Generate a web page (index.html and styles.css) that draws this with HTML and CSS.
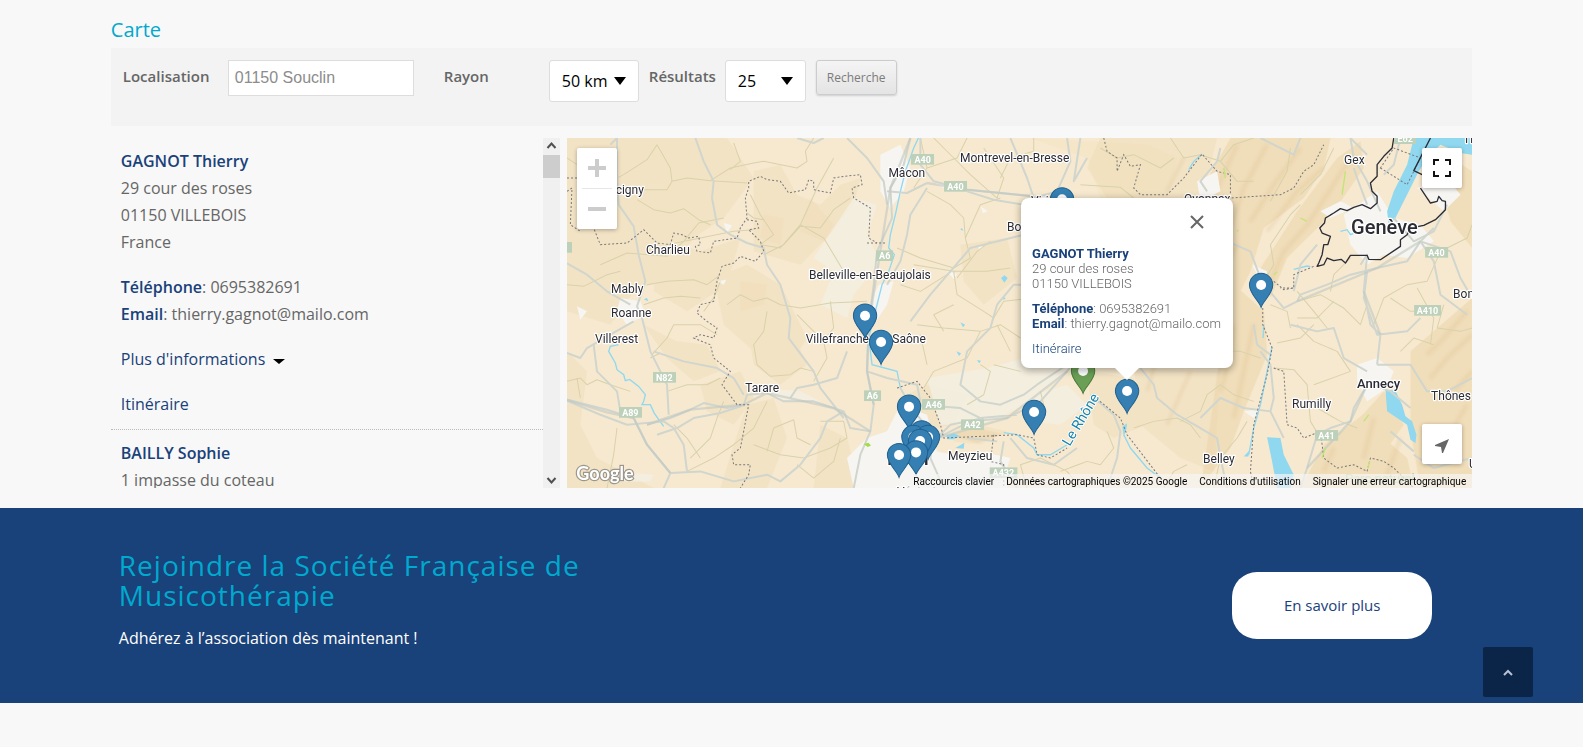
FILE: index.html
```html
<!DOCTYPE html>
<html lang="fr">
<head>
<meta charset="utf-8">
<meta name="viewport" content="width=device-width, initial-scale=1">
<title>Carte</title>
<link rel="stylesheet" href="styles.css">
</head>
<body>
<main class="wrap">
  <h2 class="title">Carte</h2>

  <form class="search">
    <label class="label label-wide" for="place">Localisation</label>
    <input class="place" id="place" type="text" value="01150 Souclin">
    <label class="label label-wide" for="radius">Rayon</label>
    <span class="pick pick-radius">
      <select class="select" id="radius"><option>50 km</option></select>
      <svg class="arrow" viewBox="0 0 12 8" aria-hidden="true"><path d="M0 0H12L6 8Z"/></svg>
    </span>
    <label class="label label-results" for="results">Résultats</label>
    <span class="pick pick-results">
      <select class="select" id="results"><option>25</option></select>
      <svg class="arrow" viewBox="0 0 12 8" aria-hidden="true"><path d="M0 0H12L6 8Z"/></svg>
    </span>
    <button class="go" type="button">Recherche</button>
  </form>

  <section class="locator">
    <div class="panel">
      <ul class="stores">
        <li class="store">
          <p><strong>GAGNOT Thierry</strong><br>29 cour des roses<br>01150 VILLEBOIS<br>France</p>
          <p><strong>Téléphone</strong>: 0695382691<br><strong>Email</strong>: thierry.gagnot@mailo.com</p>
          <p><a class="more" href="#">Plus d'informations<svg class="caret" viewBox="0 0 12 5" aria-hidden="true"><path d="M0 0H12L6 5Z"/></svg></a></p>
          <p><a href="#">Itinéraire</a></p>
        </li>
        <li class="store">
          <p><strong>BAILLY Sophie</strong><br>1 impasse du coteau</p>
        </li>
      </ul>
      <div class="track" aria-hidden="true">
        <svg class="track-arrow" viewBox="0 0 17 17"><path d="M4.500 10L8.500 5.500L12.500 10"/></svg>
        <span class="thumb"></span>
        <svg class="track-arrow track-down" viewBox="0 0 17 17"><path d="M4.500 7L8.500 11.500L12.500 7"/></svg>
      </div>
    </div>

    <div class="map">
      <svg class="tiles" viewBox="0 0 2715 1050" preserveAspectRatio="xMinYMin slice">
        <defs>
          <g id="pin"><path d="M0 0C-6 -20 -35 -40 -35 -67A35 35 0 0 1 35 -67C35 -40 6 -20 0 0Z"/><circle cy="-67" r="15"/></g>
          <filter id="soft"><feGaussianBlur stdDeviation="5"/></filter>
        </defs>
        <rect class="land" width="2715" height="1050"/>

        <!-- relief -->
        <g class="relief">
          <path d="M0 0H480L560 120L470 240L380 300L300 420L200 460L130 560L0 520Z"/>
          <path d="M280 300L400 340L520 300L480 440L360 520L260 460Z"/>
          <path d="M560 100L640 80L690 170L760 200L820 140L880 120L860 200L780 300L700 380L560 340Z"/>
          <path d="M440 420L540 380L640 440L720 600L660 700L560 640L470 560Z"/>
          <path d="M230 560L330 610L420 620L460 700L380 730L300 660Z"/>
          <path d="M540 560L660 540L720 680L640 740L560 680Z"/>
          <path d="M0 640L60 700L40 860L90 960L260 1050H0Z"/>
          <path d="M400 740L520 700L560 780L500 860L420 820Z"/>
          <path d="M540 800L620 780L660 900L600 1050H460L500 920Z"/>
          <path d="M760 860L840 900L880 1050H740Z"/>
          <path d="M1000 780L1080 740L1200 770L1160 860L1060 880Z"/>
          <path d="M1160 880L1230 860L1320 880L1240 920L1160 910Z"/>
          <path d="M1180 320L1320 300L1350 420L1250 500L1190 430Z"/>
          <path d="M1600 0H1950L1900 200L1800 260L1620 180L1560 90Z"/>
          <path d="M1560 700L1700 720L1740 860L1640 900L1580 860Z"/>
          <path d="M1700 690L1960 700L1940 1000L1840 960L1720 860Z"/>
        </g>
        <g class="relief deep">
          <path d="M1990 0H2290L2270 90L2210 180L2090 270L2050 400L2000 500L1900 520L1880 330L1900 160Z"/>
          <path d="M2310 60L2380 10L2390 90L2300 220L2160 360L2110 480L2080 390L2190 220Z"/>
          <path d="M1990 430L2090 520L2100 650L2030 820L1990 930L1900 1050L1930 850Z"/>
          <path d="M2530 640L2715 480V1050H2560L2530 880Z"/>
          <path d="M2270 920L2400 820L2450 900L2520 960L2540 1050H2200Z"/>
          <path d="M2360 860L2450 760L2510 860L2440 960Z"/>
          <path d="M2590 20L2715 100V330L2650 250Z"/>
          <path d="M1390 0L1560 60L1600 180H1800L1830 60L1740 20Z" opacity=".3"/>
          <path d="M590 230L650 240L640 320L580 300Z" opacity=".4"/>
          <path d="M730 180L800 260L770 310L700 280Z" opacity=".4"/>
          <path d="M520 430L600 440L590 500L520 520Z" opacity=".4"/>
          <path d="M1140 890L1230 870L1310 888L1230 915Z"/>
        </g>
        <g class="shade" filter="url(#soft)">
          <path d="M2010 20L1960 130L1920 220M2100 20L2030 150L1980 300M2200 30L2120 140L2050 250M2270 90L2190 160L2100 280M2230 250L2150 340L2110 430M2350 60L2280 170L2220 260M2010 320L1960 420M2000 560L1990 660L1960 760M2060 560L2030 700L2000 840"/>
          <path d="M2700 520L2630 600L2580 650M2715 590L2640 660L2590 720M2715 700L2660 760M2700 800L2640 900M2420 840L2390 960M2300 930L2270 1000M2500 900L2460 1010M1780 620L1740 760M1870 700L1800 860M1850 60L1800 160"/>
        </g>

        <!-- built-up areas -->
        <g class="urban">
          <path d="M160 480L220 490L235 530L180 560L150 520ZM30 505L60 520L40 545ZM470 255L495 262L480 285ZM450 430L478 425L470 440Z"/>
          <path d="M940 50L1000 20L1030 90L1010 160L970 210L940 160Z"/>
          <path d="M935 440L980 430L960 500L920 560L890 540Z"/>
          <path d="M1140 400L1170 408L1160 424ZM1235 320L1250 328L1235 336ZM1105 136L1150 140L1130 150ZM1240 205L1262 220L1248 226Z"/>
          <path d="M840 960L900 900L960 880L1000 800L1080 830L1110 940L1200 960L1310 980L1320 1050H860Z"/>
          <path d="M1130 1000L1240 940L1330 960L1300 1050H1130Z"/>
          <path d="M2330 230L2430 160L2480 240L2560 260L2600 310L2520 360L2450 350L2400 380L2350 320Z"/>
          <path d="M2260 220L2320 190L2360 210L2290 240ZM2550 150L2640 120L2680 170L2630 220Z"/>
          <path d="M2370 680L2430 660L2480 700L2460 750L2400 790L2370 730Z"/>
          <path d="M1890 130L1950 100L1960 160L1900 190ZM2030 820L2080 815L2060 840ZM2055 380L2100 400L2090 450Z"/>
          <path d="M1960 940L1990 960L1960 980Z"/>
        </g>
        <g class="plain">
          <path d="M860 180L930 200L900 290L940 370L860 470L840 540L760 500L800 400L740 360Z"/>
          <path d="M1080 720L1260 690L1520 620L1500 700L1380 800L1240 860L1120 860Z"/>
          <path d="M1360 780L1500 740L1560 800L1480 860L1380 850Z"/>
          <path d="M600 750L700 760L760 790L640 790ZM130 1000L260 1010L250 1030H140Z"/>
        </g>

        <!-- lakes and rivers -->
        <g class="water">
          <path d="M2540 0L2600 -5H2715V50L2680 45L2620 20L2580 60L2555 100L2530 150L2500 210L2480 250L2465 260L2460 220L2480 160L2520 80Z"/>
          <path d="M2455 755L2485 758L2505 800L2515 835L2535 850L2548 890L2545 915L2530 905L2520 860L2490 840L2460 820Z"/>
          <path d="M2100 898L2140 900L2150 950L2180 1010L2170 1050H2130L2115 970Z"/>
          <path d="M2030 955L2046 938L2044 955ZM1180 275L1184 270L1190 278Z"/>
          <path d="M1137 892L1160 886L1178 894L1160 904H1142ZM1165 930L1192 914L1190 932Z"/>
          <path d="M1302 420L1312 412L1322 420L1312 434ZM1306 476L1316 480L1310 486ZM230 484L240 480L244 490ZM1180 553L1194 560L1188 568ZM1168 640L1182 646L1176 654ZM1230 666L1242 668L1236 676ZM1310 626L1322 632Z"/>
          <path d="M1666 866L1680 856L1678 872L1670 896Z"/>
        </g>
        <g class="river">
          <path d="M155 620L130 625L125 640L145 675L150 695L170 710L175 728L188 724L215 745L235 770L230 790L225 800H250L262 826L290 865"/>
          <path d="M1055 -2L1040 30L1015 100L1000 160L985 230L970 290L965 330L982 350L965 400L945 440L930 500L920 540L905 600L915 680L990 700L1000 750"/>
          <path d="M2115 625L2100 700L2080 800L2060 870L2045 950M2090 560L2088 600M1905 48L1880 70L1865 95"/>
          <path d="M1310 884L1350 890L1400 930L1410 950L1450 950L1500 920M2320 280L2340 275L2350 290L2370 282M2180 394L2220 384L2230 386"/>
          <path d="M1670 890L1690 930L1740 990L1780 1020"/>
        </g>

        <!-- local roads -->
        <g class="minor">
          <path d="M130 130L170 110L240 65L270 20M0 60L30 80M270 20L310 90L315 130L300 155L225 155M315 130L360 120L430 128L540 135M210 185L260 215L310 225L350 212L395 245L430 260"/>
          <path d="M100 380L180 345L300 355L350 310L395 255L470 240M300 320L400 300L500 280L560 275M430 128L490 90L560 75L590 70L690 90L720 70L715 40L740 0M500 15L520 70L490 95"/>
          <path d="M550 170L580 230L620 290L580 320L640 330L700 260L750 150L800 60M700 260L770 300L830 400M590 350L650 320L700 265L760 270L800 215L850 180M540 225L560 240L590 245"/>
          <path d="M0 440L50 445L120 410L160 400M240 440L300 430L380 425L420 440L460 410M230 500L290 480L340 475L400 480M460 430L440 480L410 520M480 500L520 470L560 490L600 480L640 500L700 510L790 495L900 490"/>
          <path d="M255 650L300 600L320 560L400 560L450 590M250 660L280 645M600 520L590 580L560 620L570 680L610 715L670 710L700 690L740 700M690 530L740 580L770 610L780 660L740 730M790 490L800 570L760 620"/>
          <path d="M0 730L40 720L60 740L90 725L130 740L190 760M30 720L40 780M150 870L140 950L120 1050M320 860L360 900L400 960M370 960L430 900L450 840L470 790M360 1000L440 960L500 920L560 870L600 790"/>
          <path d="M560 920L640 950L710 960L790 930L840 900L830 850L760 850M600 940L620 870L680 845L690 900L730 920M690 980L740 1020L800 970L820 900M300 760L360 740L420 740L460 720"/>
          <path d="M1040 150L1080 90L1170 60L1200 0M1080 90L1060 0M1080 160L1150 200L1190 240L1195 300L1210 360L1160 390L1060 360L990 330M1100 0L1160 60L1210 110L1290 180L1310 120L1250 30M1195 300L1240 200L1300 180"/>
          <path d="M1160 400L1200 400L1260 400L1330 390M1040 380L1160 400L1170 470L1250 520L1280 540L1310 490L1400 480M1140 410L1060 460L1000 440M1170 420L1230 340L1270 310M1300 120L1330 60L1400 40L1400 0"/>
          <path d="M1050 560L1130 570L1240 580L1300 560L1360 600M1240 580L1200 660L1100 700L1070 750M1060 590L1080 680M1130 580L1100 530L1160 500M1240 680L1270 700L1250 770L1200 800M1330 640L1290 560M1280 680L1360 700"/>
          <path d="M1400 850L1430 800L1420 760M1380 1050L1360 980L1420 960L1500 1000L1540 1050M1480 1000L1560 970L1600 980L1640 930L1620 880M1700 870L1760 850L1830 840L1870 860L1900 900M1790 1050L1820 1000L1860 980"/>
          <path d="M1540 140L1660 148L1700 180M1600 30L1650 60L1700 50L1780 90L1820 60M1810 0L1850 60L1900 50L1960 70L2010 130L2060 130M1960 70L2000 20L2060 0M2110 190L2160 100L2170 30M2200 170L2260 110L2300 30"/>
          <path d="M2090 430L2120 380L2110 320L2170 230L2200 200M1910 400L1950 390M2190 490L2260 470L2330 510L2380 560L2400 500M2190 460L2240 520L2280 570M2450 480L2520 440L2580 430L2620 340M2450 480L2420 560"/>
          <path d="M2240 560L2200 600L2130 615M2190 540L2250 540L2300 490M2120 690L2180 695L2220 740L2230 850L2260 900M2190 560L2240 610L2310 640L2350 700L2240 740M2250 810L2320 850L2370 870M2470 480L2530 520L2600 520"/>
          <path d="M1960 740L1920 770L1900 820L1840 850M1960 740L2000 770L2060 790M2040 850L2010 900L1960 960L1940 1050M1880 620L1960 640L2020 640L2080 660M2110 500L2160 520L2170 570"/>
          <path d="M2630 500L2610 570L2680 580L2715 570M2550 450L2600 540L2590 620M2500 640L2540 600L2600 620M2640 330L2700 300L2715 260M2350 360L2300 410L2290 460"/>
        </g>

        <!-- motorways and main roads -->
        <g class="major">
          <path d="M150 0L150 120L155 200L200 265L215 350L235 430L210 505L225 540L250 640L300 740L305 830"/>
          <path d="M385 0L410 70L440 130L435 180L450 260L490 290L540 315L590 330L600 380L640 440L670 540L665 600L740 700L760 750L830 840"/>
          <path d="M0 376L60 410L120 460L190 500M200 550L130 590L60 630L40 660L0 645M80 620L90 700L150 760L160 820"/>
          <path d="M0 784L60 800L120 815L200 840L240 920L310 1005L290 1050M0 788L100 830L180 860L290 850L320 870L350 920L360 1000"/>
          <path d="M240 860L310 840L370 815L410 795L480 810L530 800M530 770L500 720L450 690L350 670L260 640M270 890L330 870L380 840L460 825L530 802L540 770L600 765L650 790L740 790L800 810L830 820L850 870L910 880"/>
          <path d="M830 820L780 850L760 900L700 980L640 1030L600 1010L500 1030L400 1000L310 1005M670 780L690 750L740 740L810 720L840 640M690 0L740 15L770 0M840 0L900 60L950 130L960 200"/>
          <path d="M1030 0L1010 80L970 150L975 240L930 340L920 440L905 560L900 700L920 800L910 880L880 950L860 1050"/>
          <path d="M1060 0L1060 80L1100 130L1200 155L1300 165L1400 175M960 160L1020 165L1080 135M1080 150L1030 230L1020 290L1000 370L960 440M1200 160L1280 185L1370 200"/>
          <path d="M1370 290L1210 330L1150 400L1090 470L1030 550M1330 0L1380 120L1400 180L1470 160L1510 70L1500 0M1540 0L1520 130L1560 60"/>
          <path d="M1410 440L1340 440L1290 500L1270 570L1200 640L1180 740L1240 790L1300 800L1370 770L1410 740L1500 680M1000 750L1040 820L1110 900L1210 850L1320 840L1420 790L1500 700L1540 650M1050 800L1180 810L1240 840L1350 830"/>
          <path d="M1110 900L1150 860L1250 840M1100 880L1090 960L1130 1050M1310 910L1300 970L1350 1050M1330 900L1380 960L1460 980L1530 930M1200 900L1290 910M900 700L960 720L1050 740L1060 790M960 960L1040 930L1110 900"/>
          <path d="M1570 770L1640 830L1660 880L1650 960L1620 1050M1720 690L1760 740L1770 780L1830 830L1900 870L1950 900L1960 960L1980 1050M1900 840L1960 780L2030 810L2110 820"/>
          <path d="M1980 310L2050 340L2080 420L2100 450L2150 510L2190 490L2200 470L2280 440L2350 410L2430 390L2520 370L2560 310L2600 270"/>
          <path d="M2380 380L2400 350L2390 460L2410 560L2440 590L2430 680M2400 400L2390 480L2430 590L2520 580L2560 540M2170 560L2250 580L2300 570L2330 660L2400 700M2430 680L2530 680L2580 760L2640 760L2715 720"/>
          <path d="M2400 740L2360 810L2350 850L2290 870L2250 890L2220 990L2200 1050M2420 740L2470 760L2530 810M2560 310L2600 370L2620 470L2700 530M2560 310L2650 340L2680 420L2715 480M2480 240L2540 310L2600 280L2640 200"/>
          <path d="M2080 640L2110 680L2120 780L2110 820L2150 900M2060 560L2070 620L2110 650M1920 160L1900 130L1950 70L1960 30M2360 90L2370 120L2400 200M2450 110L2480 80L2500 0M2400 50L2350 0L2360 60L2400 130L2440 220"/>
          <path d="M2540 950L2600 990L2715 960M2470 880L2540 940M2180 460L2200 380L2250 320M150 0L130 20M2080 0L2180 50L2200 0"/>
        </g>
        <g class="major-core">
          <path d="M0 786L120 823L200 840L240 920L310 1005M240 860L370 815L530 800L600 765L800 810L910 880M1030 0L970 150L905 560L900 700L920 800M1080 135L1200 155L1400 175M1110 900L1320 840L1500 700"/>
          <path d="M2390 460L2440 590M2220 990L2350 850L2400 740M2190 490L2430 390L2560 310"/>
        </g>

        <!-- administrative limits -->
        <g class="limit">
          <path d="M0 120H30M0 160L15 150L10 260L40 280M82 275L100 320L180 315L230 275L270 315L310 320L320 285L345 290L365 300L395 295L400 320L385 325L390 340L430 345L440 310L510 300L520 270L540 240L535 180L545 150L545 130L580 115L600 125L640 130L665 165L715 155L725 125L740 130L740 155L790 165L800 120L830 115L880 110L885 140L855 150L860 180L910 210L905 300L930 315"/>
          <path d="M540 245L570 250L575 270L545 275L580 310L590 340L565 370L520 355L500 375L465 385L450 430L440 490L400 500L390 525L420 550L450 570L440 600L400 590L380 600L430 620L440 660L490 700L465 740L510 800L545 800L530 880L520 930L495 950L500 980L550 980L545 1010L520 1050"/>
          <path d="M1610 0L1620 40L1650 60L1650 100L1670 50L1690 85L1720 80L1700 150L1720 170H1800L1850 120L1905 48L1950 100L1990 110L1990 180L2140 170L2180 150L2210 100L2240 80L2270 20"/>
          <path d="M900 315L960 315M990 750L1050 730L1090 780L1120 860L1130 900L1350 890L1400 900L1410 950L1450 960L1500 930M1280 890L1270 970L1310 980L1310 1050"/>
          <path d="M2087 510V560L2115 630L2100 710L2060 860L2050 1000L2060 1050M2120 690L2150 700L2160 860L2190 870L2210 900L2260 880L2270 960L2310 990L2360 980L2400 1000L2410 960L2450 970L2480 990L2540 1050M1580 775L1660 840L1680 890L1780 1020M2180 440L2180 450L2140 450M2120 430L2150 455L2180 450L2180 410L2240 385"/>
          <path d="M2440 90L2520 140L2560 60L2480 30Z"/>
        </g>
        <path class="border" d="M2480 0L2475 30L2450 55L2430 80L2430 115L2410 135L2415 160L2430 175L2430 195L2410 212L2385 200L2360 208L2340 218L2320 212L2300 225L2275 240L2272 255L2258 270L2265 285L2290 295L2282 320L2270 320L2265 350L2255 375L2250 385L2270 380L2280 360L2300 368L2322 364L2335 375L2350 352L2400 352L2405 364L2440 365L2500 325L2500 305L2520 290L2530 270L2570 262L2605 245L2635 215L2635 190L2625 188L2615 175L2610 190L2590 195L2560 150M2590 0L2540 98L2570 112"/>

        <!-- road numbers -->
        <g class="shield">
          <rect x="1032" y="48" width="69" height="32"/><rect x="1131" y="129" width="69" height="32"/><rect x="927" y="337" width="51" height="32"/>
          <rect x="891" y="757" width="51" height="32"/><rect x="258" y="702" width="69" height="32"/><rect x="156" y="807" width="69" height="32"/>
          <rect x="1065" y="783" width="69" height="32"/><rect x="1182" y="844" width="69" height="32"/><rect x="1268" y="988" width="83" height="32"/>
          <rect x="2481" y="-14" width="66" height="32"/><rect x="2574" y="327" width="69" height="32"/><rect x="2541" y="501" width="81" height="32"/><rect x="2244" y="876" width="69" height="32"/><rect x="0" y="312" width="15" height="32"/>
        </g>
        <g class="number">
          <text x="1067" y="74">A40</text><text x="1165" y="155">A40</text><text x="953" y="363">A6</text><text x="916" y="782">A6</text>
          <text x="292" y="728">N82</text><text x="190" y="833">A89</text><text x="1100" y="809">A46</text><text x="1216" y="870">A42</text><text x="1309" y="1014">A432</text>
          <text x="2514" y="12">E62</text><text x="2608" y="353">A40</text><text x="2581" y="527">A410</text><text x="2278" y="902">A41</text>
        </g>

        <!-- place names -->
        <g class="town">
          <text x="146" y="169">cigny</text><text x="237" y="349">Charlieu</text><text x="132" y="466">Mably</text><text x="132" y="536">Roanne</text>
          <text x="84" y="616">Villerest</text><text x="535" y="763">Tarare</text><text x="964" y="118">Mâcon</text><text x="1179" y="73">Montrevel-en-Bresse</text>
          <text x="1320" y="280">Bourg</text><text x="726" y="424">Belleville-en-Beaujolais</text><text x="716" y="616">Villefranche-sur-Saône</text>
          <text x="1143" y="967">Meyzieu</text><text x="1392" y="200">Viriat</text><text x="1851" y="194">Oyonnax</text><text x="2331" y="79">Gex</text>
          <text x="2175" y="811">Rumilly</text><text x="1908" y="976">Belley</text><text x="2592" y="787">Thônes</text><text x="2658" y="480">Bonneville</text>
          <text x="990" y="1074">Vénissieux</text>
          <text class="town-mid" x="2370" y="751">Annecy</text>
          <text class="town-big" x="2352" y="289">Genève</text>
          <text class="town-big" x="960" y="980">Lyon</text>
          <text x="2688" y="16">Th</text><text x="2706" y="990">U</text>
        </g>
        <text class="stream" transform="translate(1508 926) rotate(-59)">Le Rhône</text>
        <text class="park" x="2334" y="1036">Parc naturel</text>
        <path class="grass" d="M890 918L904 914L912 922L902 927ZM1090 1026L1104 1022L1110 1030Z"/>
        <path class="grass-line" d="M2335 100L2325 170M2120 410L2130 402M2200 240L2220 250M2390 850L2405 830M1970 90L1975 120M2265 960L2275 930M2408 970L2402 990M2010 280L2014 276"/>

        <!-- markers -->
        <g class="pins">
          <use href="#pin" x="1485" y="251"/><use href="#pin" x="2082" y="508"/><use href="#pin" x="894" y="600"/><use href="#pin" x="942" y="679"/>
          <use href="#pin" x="1026" y="873"/><use href="#pin" x="1064" y="950"/><use href="#pin" x="1039" y="964"/><use href="#pin" x="1083" y="964"/><use href="#pin" x="1059" y="976"/>
          <use href="#pin" x="1047" y="1010"/><use href="#pin" x="996" y="1018"/><use href="#pin" x="1401" y="889"/><use href="#pin" x="1680" y="826"/>
          <use class="pin-start" href="#pin" x="1548" y="766"/>
        </g>
        <text class="brand" x="28" y="1026">Google</text>
      </svg>

      <div class="info">
        <button class="close" type="button" aria-label="Fermer"><svg viewBox="0 0 14 14" aria-hidden="true"><path d="M1 1L13 13M13 1L1 13"/></svg></button>
        <p><strong>GAGNOT Thierry</strong><br>29 cour des roses<br>01150 VILLEBOIS</p>
        <p><strong>Téléphone</strong>: 0695382691<br><strong>Email</strong>: thierry.gagnot@mailo.com</p>
        <p><a href="#">Itinéraire</a></p>
      </div>

      <div class="zoom">
        <button class="zoom-btn" type="button" aria-label="Zoom avant"><svg viewBox="0 0 18 18" aria-hidden="true"><path d="M7 0H11V7H18V11H11V18H7V11H0V7H7Z"/></svg></button>
        <button class="zoom-btn" type="button" aria-label="Zoom arrière"><svg viewBox="0 0 18 18" aria-hidden="true"><path d="M0 7H18V11H0Z"/></svg></button>
      </div>
      <button class="square full" type="button" aria-label="Plein écran"><svg viewBox="0 0 18 18" aria-hidden="true"><path d="M0 0H6V2H2V6H0ZM12 0H18V6H16V2H12ZM0 12H2V16H6V18H0ZM16 12H18V18H12V16H16Z"/></svg></button>
      <button class="square locate" type="button" aria-label="Ma position"><svg viewBox="0 0 14 14" aria-hidden="true"><path d="M14 0L0 6V7L6 8L7 14H8Z"/></svg></button>

      <div class="legal">
        <button class="legal-item" type="button">Raccourcis clavier</button>
        <span class="legal-item">Données cartographiques ©2025 Google</span>
        <a class="legal-item" href="#">Conditions d'utilisation</a>
        <a class="legal-item" href="#">Signaler une erreur cartographique</a>
      </div>
    </div>
  </section>
</main>

<section class="join">
  <div class="join-inner">
    <div class="join-text">
      <h2 class="join-title">Rejoindre la Société Française de Musicothérapie</h2>
      <p class="join-lead">Adhérez à l’association dès maintenant !</p>
    </div>
    <a class="join-btn" href="#">En savoir plus</a>
  </div>
</section>

<a class="to-top" href="#" aria-label="Haut de page"><svg viewBox="0 0 10 6" aria-hidden="true"><path d="M1 5L5 1L9 5"/></svg></a>
</body>
</html>
```
FILE: styles.css
```css
* { box-sizing: border-box; }

body {
  margin: 0;
  background: #f8f8f8;
  color: #666;
  font: 16px/27px "Open Sans", "Noto Sans", sans-serif;
}
p, h2, ul { margin: 0; padding: 0; }
a { color: #19417a; text-decoration: none; }
strong { color: #19417a; font-weight: 600; }
button, input, select { margin: 0; font: inherit; }

.wrap { width: 86%; margin: 0 auto; padding-top: 12px; }
.title { color: #00a9ce; font-size: 20px; font-weight: 400; line-height: 36px; }

/* search form */
.search {
  display: flex;
  align-items: flex-start;
  height: 78px;
  padding: 12px;
  background: #f3f3f3;
}
.label { font-size: 15px; font-weight: 600; line-height: 32px; }
.label-wide { width: 105px; }
.label-results { width: 76px; }
.place {
  width: 186px;
  height: 36px;
  margin-right: 30px;
  padding: 0 6px;
  border: 1px solid #ddd;
  background: #fff;
  color: #8c8c8c;
  font-family: "Liberation Sans", Arial, sans-serif;
}
.pick { position: relative; margin-right: 10px; }
.pick-radius { width: 90px; }
.pick-results { width: 81px; }
.select {
  display: block;
  width: 100%;
  height: 42px;
  padding: 0 12px;
  border: 1px solid #ddd;
  border-radius: 3px;
  background: #fff;
  color: #000;
  appearance: none;
}
.arrow { position: absolute; top: 17px; right: 13px; width: 12px; height: 8px; pointer-events: none; }
.go {
  height: 35px;
  padding: 0 10px;
  border: 1px solid #ccc;
  border-radius: 3px;
  background: linear-gradient(#f4f4f4, #e4e4e4);
  box-shadow: 0 1px 2px rgba(0, 0, 0, .15);
  color: #7c7c7c;
  font-size: 12px;
}

/* results and map */
.locator { display: flex; gap: 7px; height: 350px; margin-top: 12px; }
.panel { display: flex; flex: 0 0 33%; min-width: 0; }
.stores { flex: 1; overflow-y: auto; list-style: none; scrollbar-width: none; }
.store { padding: 10px 10px 11px; border-bottom: 1px dotted #bbb; }
.store p + p { margin-top: 18px; }
.caret { width: 12px; height: 5px; margin-left: 8px; vertical-align: 1px; }
.track { display: flex; flex-direction: column; width: 17px; background: #f0f0f0; }
.track-arrow { width: 17px; height: 17px; fill: none; stroke: #505050; stroke-width: 2; }
.track-down { margin-top: auto; }
.thumb { height: 23px; background: #cdcdcd; }

.map {
  position: relative;
  flex: 1;
  overflow: hidden;
  background: #f6e8cc;
  font-family: Roboto, sans-serif;
}
.tiles { display: block; width: 100%; height: 100%; }
.land { fill: #f7e9cf; }
.relief { fill: #f2e0bf; opacity: .6; }
.deep { fill: #ecd6aa; }
.shade { fill: none; stroke: #d9be8c; stroke-width: 12; opacity: .25; }
.urban { fill: #f6f5f2; }
.plain { fill: #f3efe3; opacity: .8; }
.water { fill: #8fd8f0; }
.river { fill: none; stroke: #8fd8f0; stroke-width: 4; }
.minor { fill: none; stroke: #d8d2aa; stroke-width: 3; stroke-linejoin: round; }
.major { fill: none; stroke: #d0d5cd; stroke-width: 6; stroke-linejoin: round; }
.major-core { fill: none; stroke: #bfc8c2; stroke-width: 7; stroke-linejoin: round; opacity: .6; }
.limit { fill: none; stroke: #77777c; stroke-width: 3; stroke-dasharray: 6 6; }
.border { fill: none; stroke: #2c2c34; stroke-width: 4; stroke-linejoin: round; }
.shield { fill: #bdd0b9; }
.number { fill: #fff; font-size: 27px; font-weight: 700; text-anchor: middle; }
.town { fill: #2b2b33; font-size: 36px; stroke: #fff; stroke-width: 7; stroke-linejoin: round; paint-order: stroke; }
.town-mid { font-size: 39px; font-weight: 500; }
.town-big { font-size: 60px; font-weight: 500; }
.stream { fill: #1585ae; stroke: #fff; stroke-width: 5; paint-order: stroke; font-size: 42px; }
.park { fill: #a9c796; font-size: 39px; }
.grass { fill: #a5dc46; }
.grass-line { fill: none; stroke: #c0e676; stroke-width: 4; }
.pins { fill: #367fb2; stroke: #1f618f; stroke-width: 3; }
.pins circle, #pin circle { fill: #fff; stroke: none; }
.pin-start { fill: #6a9f55; stroke: #487b38; }
.brand {
  fill: #fff;
  stroke: #9b968b;
  stroke-width: 7;
  paint-order: stroke;
  font-family: Lato, sans-serif;
  font-size: 54px;
  font-weight: 700;
}

.info {
  position: absolute;
  top: 60px;
  left: 454px;
  width: 212px;
  height: 170px;
  padding: 48px 0 0 11px;
  border-radius: 8px;
  background: #fff;
  box-shadow: 0 2px 7px 1px rgba(0, 0, 0, .3);
  color: #666;
  font-size: 13px;
  font-weight: 300;
  line-height: 15px;
  white-space: nowrap;
}
.info::after {
  content: "";
  position: absolute;
  top: 100%;
  left: 50%;
  margin-left: -12px;
  border: 12px solid transparent;
  border-top-color: #fff;
  border-bottom-width: 0;
}
.info p + p { margin-top: 10px; }
.info strong { font-weight: 700; }
.close { position: absolute; top: 12px; right: 24px; width: 24px; height: 24px; padding: 5px; border: 0; background: none; }
.close svg { display: block; width: 14px; height: 14px; fill: none; stroke: #666; stroke-width: 2; }

.zoom, .square {
  position: absolute;
  border: 0;
  border-radius: 2px;
  background: #fff;
  box-shadow: 0 1px 4px rgba(0, 0, 0, .3);
}
.zoom { top: 10px; left: 10px; width: 40px; padding: 0 5px; }
.zoom-btn { display: block; width: 30px; height: 40px; padding: 11px 6px; border: 0; background: none; }
.zoom-btn + .zoom-btn { height: 41px; border-top: 1px solid #e6e6e6; }
.zoom-btn svg { display: block; width: 18px; height: 18px; fill: #ccc; }
.square { display: flex; align-items: center; justify-content: center; right: 10px; width: 40px; height: 40px; padding: 0; }
.full { top: 10px; }
.full svg { width: 18px; height: 18px; fill: #111; }
.locate { bottom: 24px; }
.locate svg { width: 14px; height: 14px; margin-top: 4px; fill: #666; }

.legal { position: absolute; right: 0; bottom: 0; display: flex; background: rgba(245, 245, 245, .7); }
.legal-item { padding: 1px 6px 0; border: 0; background: none; color: #000; font: 10px/13px Roboto, sans-serif; white-space: nowrap; }

/* membership band */
.join { margin-top: 20px; background: #19417a; }
.join-inner {
  display: flex;
  align-items: center;
  justify-content: space-between;
  width: 86%;
  min-height: 195px;
  margin: 0 auto;
  padding: 0 40px 0 8px;
}
.join-text { max-width: 500px; padding-bottom: 10px; }
.join-title { color: #00a9ce; font-size: 28px; font-weight: 400; letter-spacing: 1px; line-height: 30px; }
.join-lead { margin-top: 15px; color: #fff; }
.join-btn {
  width: 200px;
  border-radius: 25px;
  background: #fff;
  font-size: 15px;
  line-height: 67px;
  text-align: center;
}

.to-top {
  position: fixed;
  right: 50px;
  bottom: 50px;
  display: flex;
  align-items: center;
  justify-content: center;
  width: 50px;
  height: 50px;
  padding-top: 2px;
  border-radius: 2px;
  background: #0b2548;
}
.to-top svg { width: 10px; height: 6px; overflow: visible; fill: none; stroke: #b8c2d4; stroke-width: 2; }
```
